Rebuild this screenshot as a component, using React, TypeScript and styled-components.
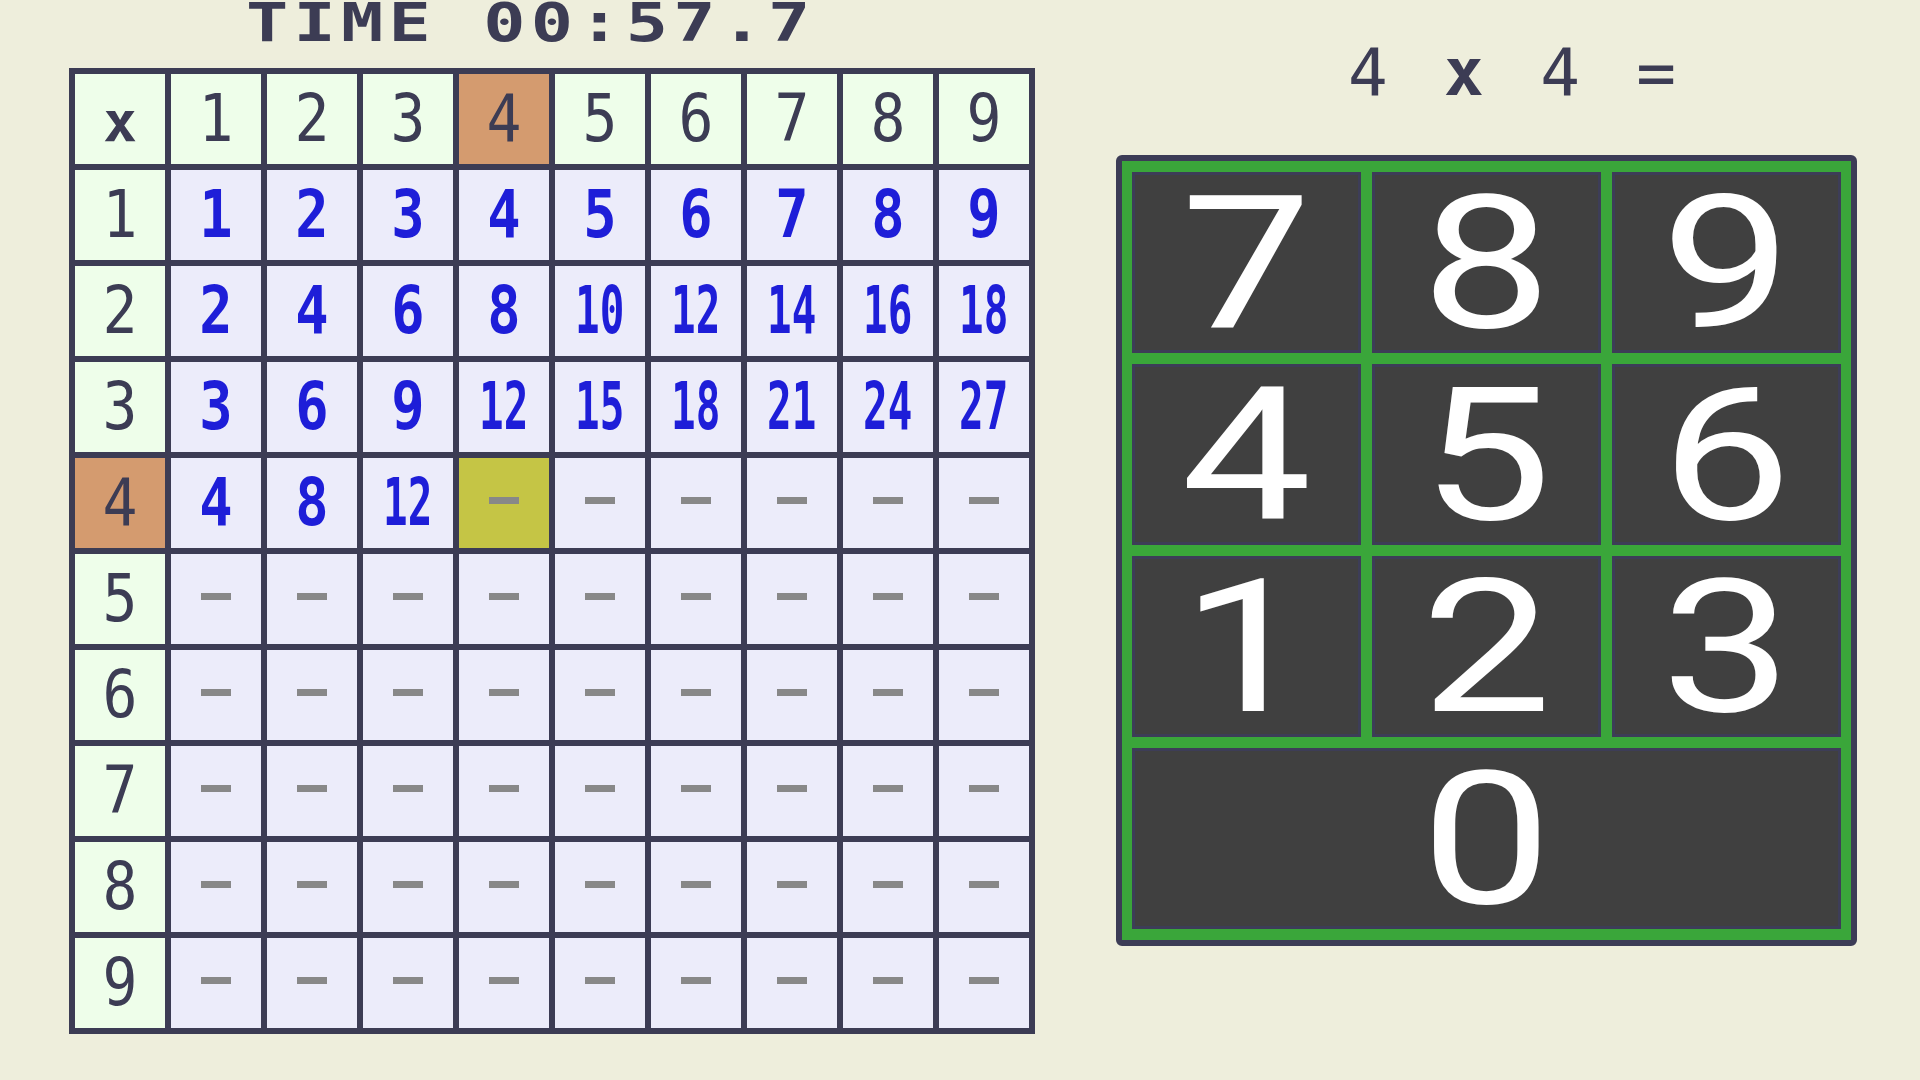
import React from "react";
import styled, { createGlobalStyle } from "styled-components";

const GlobalStyle = createGlobalStyle`
  html, body {
    margin: 0;
    padding: 0;
    background: #eeeedc;
  }
  body {
    font-family: "DejaVu Sans Mono", "Liberation Mono", monospace;
  }
`;

const NAVY = "#3c3c54";

const Page = styled.div`
  width: 1920px;
  height: 1080px;
  box-sizing: border-box;
  padding-left: 69px;
  display: flex;
  align-items: flex-start;
  gap: 81px;
  overflow: hidden;
`;

const LeftColumn = styled.div`
  display: flex;
  flex-direction: column;
`;

const TimerRow = styled.div`
  height: 68px;
  padding-left: 177px;
  display: flex;
  align-items: flex-start;
`;

const TimerText = styled.span`
  display: inline-block;
  margin-top: 3px;
  font-size: 54px;
  font-weight: bold;
  line-height: 40px;
  letter-spacing: 4px;
  color: ${NAVY};
  white-space: pre;
  transform: scaleX(1.3);
  transform-origin: left top;
`;

const Table = styled.div`
  display: grid;
  grid-template-columns: repeat(10, 90px);
  grid-auto-rows: 90px;
  gap: 6px;
  padding: 6px;
  background: ${NAVY};
`;

type Tone = "head" | "body" | "hot" | "cursor";

const toneColors: Record<Tone, string> = {
  head: "#eefeea",
  body: "#ececfa",
  hot: "#d49b6f",
  cursor: "#c5c545",
};

const Cell = styled.div<{ $tone: Tone }>`
  display: flex;
  align-items: center;
  justify-content: center;
  background: ${(p) => toneColors[p.$tone]};
`;

const Num = styled.span<{ $answer?: boolean; $squeeze: number }>`
  display: inline-block;
  font-size: 66px;
  line-height: 60px;
  font-weight: ${(p) => (p.$answer ? "bold" : "normal")};
  color: ${(p) => (p.$answer ? "#1e1ed8" : NAVY)};
  transform: scaleX(${(p) => p.$squeeze});
`;

const TimesMark = styled.span`
  display: inline-block;
  font-size: 56px;
  line-height: 50px;
  font-weight: bold;
  color: ${NAVY};
  margin-top: 6px;
`;

const Dash = styled.span`
  display: block;
  width: 30px;
  height: 7px;
  margin-top: -6px;
  background: #888888;
`;

const RightColumn = styled.div`
  display: flex;
  flex-direction: column;
`;

const Equation = styled.div`
  height: 155px;
  box-sizing: border-box;
  padding: 40px 0 0 232px;
  font-size: 66px;
  line-height: 1;
  letter-spacing: 8.3px;
  color: ${NAVY};
  white-space: pre;
`;

const EqTimes = styled.span`
  font-weight: bold;
`;

const Keypad = styled.div`
  display: grid;
  grid-template-columns: repeat(3, 229px);
  grid-template-rows: repeat(4, 181px);
  gap: 11px;
  padding: 11px 10px;
  background: #3aa63a;
  border: 6px solid #3c3c56;
  border-radius: 6px;
`;

const Key = styled.button<{ $wide?: boolean }>`
  grid-column: ${(p) => (p.$wide ? "1 / -1" : "auto")};
  box-sizing: border-box;
  margin: 0;
  padding: 0;
  display: flex;
  align-items: center;
  justify-content: center;
  background: #404040;
  border: 3px solid #3d3d57;
  color: #ffffff;
  font-family: Roboto, "DejaVu Sans", sans-serif;
  font-size: 186px;
  line-height: 140px;
  cursor: pointer;
`;

const KeyLabel = styled.span`
  display: inline-block;
  transform: scaleX(1.25);
`;

const ROW = 4;
const COL = 4;
const nums = [1, 2, 3, 4, 5, 6, 7, 8, 9];

function isAnswered(r: number, c: number) {
  return r < ROW || (r === ROW && c < COL);
}

function BodyCell({ r, c }: { r: number; c: number }) {
  const tone: Tone = r === ROW && c === COL ? "cursor" : "body";
  if (!isAnswered(r, c)) {
    return (
      <Cell $tone={tone}>
        <Dash />
      </Cell>
    );
  }
  const v = r * c;
  return (
    <Cell $tone={tone}>
      <Num $answer $squeeze={v >= 10 ? 0.62 : 0.84}>
        {v}
      </Num>
    </Cell>
  );
}

export default function App() {
  return (
    <>
      <GlobalStyle />
      <Page>
        <LeftColumn>
          <TimerRow>
            <TimerText>TIME 00:57.7</TimerText>
          </TimerRow>
          <Table>
            <Cell $tone="head">
              <TimesMark>x</TimesMark>
            </Cell>
            {nums.map((c) => (
              <Cell key={`h${c}`} $tone={c === COL ? "hot" : "head"}>
                <Num $squeeze={0.88}>{c}</Num>
              </Cell>
            ))}
            {nums.map((r) => (
              <React.Fragment key={`r${r}`}>
                <Cell $tone={r === ROW ? "hot" : "head"}>
                  <Num $squeeze={0.88}>{r}</Num>
                </Cell>
                {nums.map((c) => (
                  <BodyCell key={`${r}-${c}`} r={r} c={c} />
                ))}
              </React.Fragment>
            ))}
          </Table>
        </LeftColumn>
        <RightColumn>
          <Equation>
            {ROW} <EqTimes>x</EqTimes> {COL} =
          </Equation>
          <Keypad>
            {[7, 8, 9, 4, 5, 6, 1, 2, 3].map((k) => (
              <Key key={k}>
                <KeyLabel>{k}</KeyLabel>
              </Key>
            ))}
            <Key $wide>
              <KeyLabel>0</KeyLabel>
            </Key>
          </Keypad>
        </RightColumn>
      </Page>
    </>
  );
}
